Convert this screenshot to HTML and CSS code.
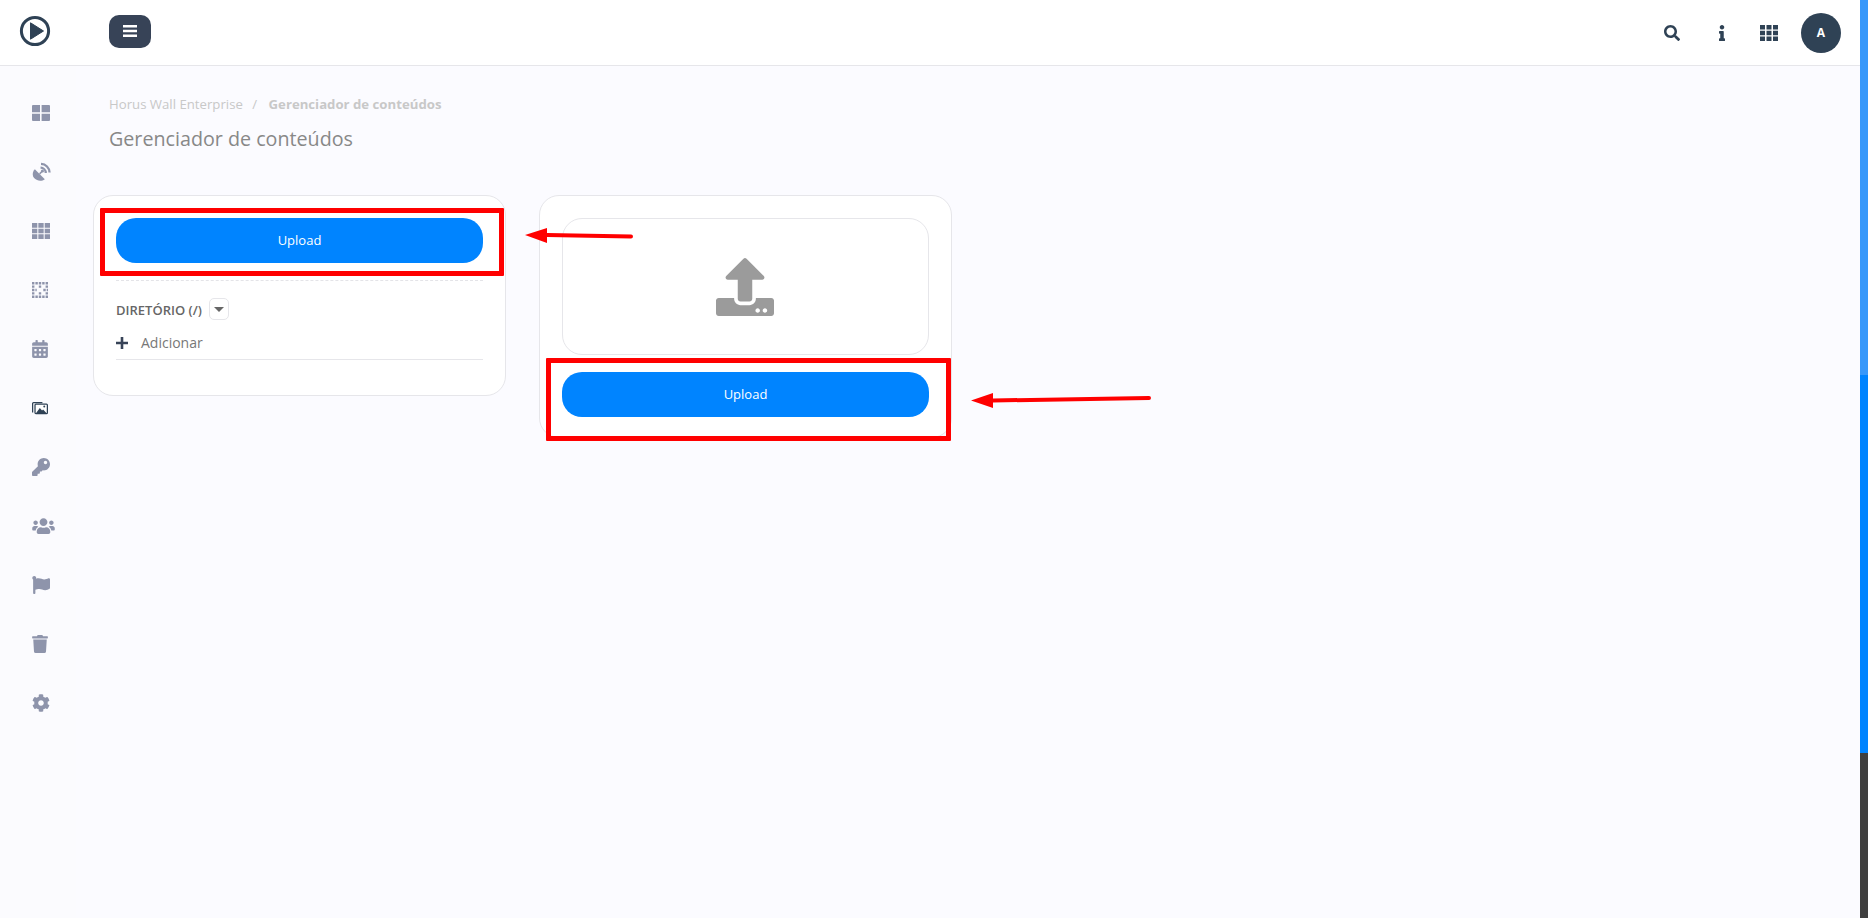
FILE: index.html
```html
<!DOCTYPE html>
<html lang="en">
<head>
    <meta charset="UTF-8">
    <meta name="viewport" content="width=device-width, initial-scale=1.0">
    <title>Gerenciador de conteúdos</title>
    <link rel="stylesheet" href="styles.css">
</head>
<body>
    <div class="app">
        <header class="topbar">
            <div class="logo-box">
                <svg class="logo" viewBox="0 0 32 32"><circle cx="16" cy="16" r="13.6" fill="none" stroke="#2f4255" stroke-width="3"/><path d="M11.5 7.8 24.5 16 11.5 24.2Z" fill="#2f4255" stroke="#2f4255" stroke-linejoin="round"/></svg>
            </div>
            <button class="menu-btn" type="button">
                <svg viewBox="0 0 14 12"><path d="M0 0h14v2.4H0zM0 4.8h14v2.4H0zM0 9.6h14V12H0z" fill="#fff"/></svg>
            </button>
            <nav class="top-actions">
                <svg class="top-icon search" viewBox="0 0 512 512"><path d="M505 442.7L405.3 343c-4.5-4.5-10.6-7-17-7H372c27.6-35.3 44-79.7 44-128C416 93.1 322.9 0 208 0S0 93.1 0 208s93.1 208 208 208c48.3 0 92.7-16.4 128-44v16.3c0 6.4 2.5 12.5 7 17l99.7 99.7c9.4 9.4 24.6 9.4 33.9 0l28.3-28.3c9.4-9.4 9.4-24.6.1-34zM208 336c-70.7 0-128-57.2-128-128 0-70.7 57.2-128 128-128 70.7 0 128 57.2 128 128 0 70.7-57.2 128-128 128z"/></svg>
                <svg class="top-icon info" viewBox="0 0 192 512"><path d="M20 424.229h20V279.771H20c-11.046 0-20-8.954-20-20V212c0-11.046 8.954-20 20-20h112c11.046 0 20 8.954 20 20v212.229h20c11.046 0 20 8.954 20 20V492c0 11.046-8.954 20-20 20H20c-11.046 0-20-8.954-20-20v-47.771c0-11.046 8.954-20 20-20zM96 0C56.235 0 24 32.235 24 72s32.235 72 72 72 72-32.235 72-72S135.764 0 96 0z"/></svg>
                <svg class="top-icon grid" viewBox="0 0 18 16"><path d="M0 0h5v4.6H0zM6.5 0h5v4.6h-5zM13 0h5v4.6h-5zM0 5.7h5v4.6H0zM6.5 5.7h5v4.6h-5zM13 5.7h5v4.6h-5zM0 11.4h5V16H0zM6.5 11.4h5V16h-5zM13 11.4h5V16h-5z"/></svg>
                <div class="avatar">A</div>
            </nav>
        </header>
        <div class="body-row">
            <aside class="sidebar">
                <svg class="side-icon" viewBox="0 0 18 16"><path d="M0 1a1 1 0 0 1 1-1h7v7.3H0zM9.6 0h7.4a1 1 0 0 1 1 1v6.3H9.6zM0 8.7h8V16H1a1 1 0 0 1-1-1zM9.6 8.7H18V15a1 1 0 0 1-1 1H9.6z"/></svg>
                <svg class="side-icon dish" viewBox="0 0 20 20"><path d="M3 7 13.500 17.500C10 20 5.500 19.500 2.500 16.500-.2 13.500.5 9.500 3 7Z"/><path d="M8 12l3-3" stroke="#8e94ab" stroke-width="1.600" fill="none"/><circle cx="11" cy="9" r="1.600"/><path d="M9 5.500C12 5.600 14.400 8 14.500 11M9.500 1.500C14.500 1.700 18.300 5.500 18.500 10.500" stroke="#8e94ab" stroke-width="2.400" fill="none"/></svg>
                <svg class="side-icon" viewBox="0 0 18 16"><path d="M0 0h5.300v4.700H0zM6.350 0h5.300v4.700h-5.300zM12.700 0H18v4.700h-5.300zM0 5.650h5.300v4.700H0zM6.350 5.650h5.300v4.700h-5.300zM12.700 5.650H18v4.700h-5.300zM0 11.300h5.300V16H0zM6.350 11.300h5.300V16h-5.300zM12.700 11.300H18V16h-5.300z"/></svg>
                <svg class="side-icon dotted" viewBox="0 0 16 16"><path d="M0 1.200h16M0 8h4.700M11.300 8H16M0 14.800h16" stroke-dasharray="2.400 1"/><path d="M0 4.600h2.400M6.800 4.600h2.400M13.600 4.600H16M0 11.400h2.400M6.800 11.400h2.400M13.600 11.400H16"/></svg>
                <svg class="side-icon narrow" viewBox="0 0 448 512"><path d="M0 464c0 26.500 21.500 48 48 48h352c26.500 0 48-21.500 48-48V192H0v272zm320-196c0-6.600 5.400-12 12-12h40c6.600 0 12 5.400 12 12v40c0 6.600-5.400 12-12 12h-40c-6.600 0-12-5.400-12-12v-40zm0 128c0-6.600 5.400-12 12-12h40c6.600 0 12 5.400 12 12v40c0 6.600-5.400 12-12 12h-40c-6.600 0-12-5.400-12-12v-40zM192 268c0-6.600 5.400-12 12-12h40c6.600 0 12 5.400 12 12v40c0 6.600-5.400 12-12 12h-40c-6.600 0-12-5.400-12-12v-40zm0 128c0-6.600 5.400-12 12-12h40c6.600 0 12 5.400 12 12v40c0 6.600-5.400 12-12 12h-40c-6.600 0-12-5.400-12-12v-40zM64 268c0-6.600 5.400-12 12-12h40c6.600 0 12 5.400 12 12v40c0 6.600-5.400 12-12 12H76c-6.600 0-12-5.400-12-12v-40zm0 128c0-6.600 5.400-12 12-12h40c6.600 0 12 5.400 12 12v40c0 6.600-5.400 12-12 12H76c-6.600 0-12-5.400-12-12v-40zM400 64h-48V16c0-8.800-7.200-16-16-16h-32c-8.800 0-16 7.200-16 16v48H160V16c0-8.800-7.200-16-16-16h-32c-8.800 0-16 7.200-16 16v48H48C21.500 64 0 85.500 0 112v48h448v-48c0-26.500-21.500-48-48-48z"/></svg>
                <svg class="side-icon narrow" viewBox="0 0 18 16"><path d="M.7 13V3a1 1 0 0 1 1-1h10" fill="none" stroke="#2f4255" stroke-width="1.400"/><rect x="3.400" y="3.700" width="13.900" height="10.600" rx="1" fill="#fff" stroke="#2f4255" stroke-width="1.400"/><circle cx="13.800" cy="6.300" r="1.100" fill="#2f4255"/><path d="M4 14.500 8.800 8l2.500 2.800 1.200-1 4.500 4.700Z" fill="#2f4255"/></svg>
                <svg class="side-icon" viewBox="0 0 512 512"><path d="M512 176.001C512 273.203 433.202 352 336 352c-11.220 0-22.190-1.062-32.827-3.069l-24.012 27.014A23.999 23.999 0 0 1 261.223 384H224v40c0 13.255-10.745 24-24 24h-40v40c0 13.255-10.745 24-24 24H24c-13.255 0-24-10.745-24-24v-78.059c0-6.365 2.529-12.470 7.029-16.971l161.802-161.802C163.108 213.814 160 195.271 160 176 160 78.798 238.797.001 335.999 0 433.488-.001 512 78.511 512 176.001zM336 128c0 26.510 21.490 48 48 48s48-21.490 48-48-21.490-48-48-48-48 21.490-48 48z"/></svg>
                <svg class="side-icon wide" viewBox="0 0 640 512"><path d="M96 224c35.300 0 64-28.700 64-64s-28.700-64-64-64-64 28.700-64 64 28.700 64 64 64zm448 0c35.300 0 64-28.700 64-64s-28.700-64-64-64-64 28.700-64 64 28.700 64 64 64zm32 32h-64c-17.600 0-33.500 7.100-45.100 18.600 40.300 22.100 68.900 62 75.100 109.400h66c17.700 0 32-14.300 32-32v-32c0-35.300-28.700-64-64-64zm-256 0c61.900 0 112-50.100 112-112S381.900 32 320 32 208 82.100 208 144s50.100 112 112 112zm76.800 32h-8.300c-20.800 10-43.900 16-68.500 16s-47.600-6-68.500-16h-8.300C179.600 288 128 339.600 128 403.200V432c0 26.500 21.500 48 48 48h288c26.500 0 48-21.500 48-48v-28.800c0-63.600-51.600-115.200-115.200-115.200zm-223.700-13.400C161.500 263.100 145.600 256 128 256H64c-35.300 0-64 28.700-64 64v32c0 17.700 14.300 32 32 32h65.900c6.300-47.400 34.900-87.300 75.200-109.400z"/></svg>
                <svg class="side-icon" viewBox="0 0 512 512"><path d="M349.565 98.783C295.978 98.783 251.721 64 184.348 64c-24.955 0-47.309 4.384-68.045 12.013a55.947 55.947 0 0 0 3.586-23.562C118.117 24.015 94.806 1.206 66.338.048 34.345-1.254 8 24.296 8 56c0 19.026 9.497 35.825 24 45.945V488c0 13.255 10.745 24 24 24h16c13.255 0 24-10.745 24-24v-94.400c28.311-12.064 63.582-22.122 114.435-22.122 53.588 0 97.844 34.783 165.217 34.783 48.169 0 86.667-16.294 122.505-40.858C506.840 359.452 512 349.571 512 339.045v-243.100c0-23.393-24.269-38.870-45.485-29.016-34.338 15.948-76.454 31.854-116.950 31.854z"/></svg>
                <svg class="side-icon narrow" viewBox="0 0 448 512"><path d="M432 32H312l-9.400-18.700A24 24 0 0 0 281.100 0H166.800a23.720 23.720 0 0 0-21.400 13.300L136 32H16A16 16 0 0 0 0 48v32a16 16 0 0 0 16 16h416a16 16 0 0 0 16-16V48a16 16 0 0 0-16-16zM53.200 467a48 48 0 0 0 47.900 45h245.800a48 48 0 0 0 47.900-45L416 128H32z"/></svg>
                <svg class="side-icon" viewBox="0 0 512 512"><path d="M487.400 315.700l-42.600-24.600c4.300-23.200 4.300-47 0-70.200l42.600-24.600c4.900-2.800 7.100-8.600 5.500-14-11.100-35.600-30-67.800-54.700-94.600-3.800-4.100-10-5.100-14.800-2.300L380.800 110c-17.900-15.400-38.500-27.300-60.800-35.100V25.800c0-5.600-3.900-10.500-9.400-11.700-36.700-8.200-74.300-7.800-109.200 0-5.500 1.200-9.400 6.100-9.400 11.700V75c-22.200 7.900-42.800 19.800-60.800 35.100L88.700 85.500c-4.900-2.800-11-1.900-14.800 2.300-24.700 26.700-43.600 58.900-54.700 94.600-1.700 5.400.6 11.200 5.500 14L67.300 221c-4.300 23.200-4.300 47 0 70.200l-42.600 24.600c-4.900 2.800-7.100 8.600-5.500 14 11.100 35.600 30 67.800 54.700 94.600 3.800 4.100 10 5.100 14.800 2.300l42.600-24.600c17.900 15.400 38.500 27.300 60.800 35.100v49.200c0 5.600 3.900 10.500 9.400 11.700 36.700 8.200 74.300 7.800 109.200 0 5.500-1.200 9.400-6.100 9.400-11.700v-49.200c22.200-7.900 42.800-19.800 60.800-35.100l42.600 24.600c4.900 2.800 11 1.900 14.800-2.300 24.700-26.700 43.600-58.900 54.700-94.600 1.500-5.500-.7-11.300-5.600-14.100zM256 336c-44.100 0-80-35.900-80-80s35.900-80 80-80 80 35.900 80 80-35.900 80-80 80z"/></svg>
            </aside>
            <main class="content">
                <div class="breadcrumb">
                    <span>Horus Wall Enterprise</span>
                    <span class="sep">/</span>
                    <strong>Gerenciador de conteúdos</strong>
                </div>
                <h1 class="page-title">Gerenciador de conteúdos</h1>
                <div class="cards">
                    <section class="card card-files">
                        <button class="upload-btn" type="button">Upload</button>
                        <div class="dashed"></div>
                        <div class="dir-row">
                            <span class="dir-label">DIRETÓRIO (/)</span>
                            <span class="dir-caret"></span>
                        </div>
                        <div class="add-row">
                            <svg class="plus" viewBox="0 0 12 12"><path d="M4.700 0h2.600v4.700H12v2.600H7.300V12H4.700V7.300H0V4.700h4.700z"/></svg>
                            <span>Adicionar</span>
                        </div>
                    </section>
                    <section class="card card-upload">
                        <div class="dropzone">
                            <svg class="drop-icon" viewBox="0 0 512 512"><path d="M296 384h-80c-13.300 0-24-10.700-24-24V192h-87.700c-17.800 0-26.700-21.500-14.100-34.100L242.300 5.700c7.500-7.500 19.800-7.500 27.300 0l152.200 152.200c12.600 12.600 3.700 34.100-14.100 34.100H320v168c0 13.300-10.700 24-24 24zm216-8v112c0 13.300-10.700 24-24 24H24c-13.300 0-24-10.700-24-24V376c0-13.300 10.700-24 24-24h136v8c0 30.900 25.100 56 56 56h80c30.900 0 56-25.100 56-56v-8h136c13.300 0 24 10.700 24 24zm-124 88c0-11-9-20-20-20s-20 9-20 20 9 20 20 20 20-9 20-20zm64 0c0-11-9-20-20-20s-20 9-20 20 9 20 20 20 20-9 20-20z"/></svg>
                        </div>
                        <button class="upload-btn" type="button">Upload</button>
                    </section>
                </div>
            </main>
        </div>
        <!-- red annotations drawn over the screenshot -->
        <div class="mark mark-left"></div>
        <div class="mark mark-right"></div>
        <svg class="arrows" viewBox="0 0 1860 918">
            <path d="M631 236.500 547 235" class="arrow-line"/>
            <path d="M525 235 547 228V243Z" class="arrow-head"/>
            <path d="M1149 398 993 400.500" class="arrow-line"/>
            <path d="M971 400.500 993 393V408Z" class="arrow-head"/>
        </svg>
    </div>
    <div class="scroll-strip">
        <div class="strip-light"></div>
        <div class="strip-blue"></div>
        <div class="strip-dark"></div>
    </div>
</body>
</html>
```

FILE: styles.css
```css
html, body {
    height: 100%;
}

body {
    font-family: 'Open Sans', sans-serif;
    margin: 0;
    display: flex;
    overflow: hidden;
    background: #fbfbff;
    color: #777;
}

.app {
    position: relative;
    flex: 1;
    display: flex;
    flex-direction: column;
    min-width: 0;
}

.topbar {
    height: 65px;
    flex: none;
    display: flex;
    align-items: center;
    background: #fff;
    border-bottom: 1px solid #e6e6ea;
}

.logo-box {
    width: 109px;
    margin-top: -3px;
    padding-left: 19px;
    box-sizing: border-box;
    display: flex;
}

.logo {
    width: 32px;
    height: 32px;
}

.menu-btn {
    width: 42px;
    height: 33px;
    margin-top: -3px;
    padding: 0;
    border: none;
    border-radius: 10px;
    background: #374357;
    display: flex;
    align-items: center;
    justify-content: center;
}

.menu-btn svg {
    width: 14px;
    height: 12px;
}

.top-actions {
    margin-left: auto;
    display: flex;
    align-items: center;
    padding-right: 19px;
}

.top-icon {
    fill: #2f4255;
}

.search {
    width: 16px;
    height: 16px;
    margin-right: 39px;
}

.info {
    width: 6px;
    height: 16px;
    margin-right: 35px;
}

.grid {
    width: 18px;
    height: 16px;
    margin-right: 23px;
}

.avatar {
    width: 40px;
    height: 40px;
    border-radius: 50%;
    background: #2f4255;
    color: #fff;
    font-size: 12px;
    font-weight: 700;
    display: flex;
    align-items: center;
    justify-content: center;
}

.body-row {
    flex: 1;
    display: flex;
    min-height: 0;
}

.sidebar {
    width: 76px;
    flex: none;
    padding: 38px 0 0 32px;
    box-sizing: border-box;
    background: #fbfbfe;
    display: flex;
    flex-direction: column;
    align-items: flex-start;
    gap: 41px;
}

.side-icon {
    width: 18px;
    height: 18px;
    fill: #8e94ab;
}

.side-icon.wide {
    width: 23px;
}

.side-icon.narrow {
    width: 16px;
}

.side-icon.dish {
    width: 19px;
    height: 20px;
    margin: -1px 0;
}

.side-icon.dotted {
    width: 16px;
    fill: none;
    stroke: #8e94ab;
    stroke-width: 2.400;
}

.content {
    flex: 1;
    padding: 28px 0 0 17px;
}

.breadcrumb {
    padding-left: 16px;
    font-size: 13.200px;
    line-height: 20px;
    color: #c8c8c8;
}

.breadcrumb .sep {
    margin: 0 8px 0 6px;
}

.breadcrumb strong {
    font-weight: 700;
}

.page-title {
    margin: 12px 0 0;
    padding-left: 16px;
    font-size: 19.700px;
    line-height: 26px;
    font-weight: 400;
    color: #888;
}

.cards {
    margin-top: 43px;
    display: flex;
    align-items: flex-start;
    gap: 33px;
}

.card {
    width: 413px;
    box-sizing: border-box;
    padding: 22px 22px 0;
    background: #fff;
    border: 1px solid #e6e6ea;
    border-radius: 20px;
}

.card-files {
    height: 201px;
}

.card-upload {
    height: 243px;
}

.upload-btn {
    display: block;
    width: 100%;
    height: 45px;
    padding-bottom: 2px;
    border: none;
    border-radius: 20px;
    background: #0084ff;
    color: #fff;
    font-family: inherit;
    font-size: 13px;
    font-weight: 500;
}

.dashed {
    margin-top: 17px;
    border-top: 1px dashed #e4e4e8;
}

.dir-row {
    margin-top: 17px;
    display: flex;
    align-items: center;
    gap: 7px;
}

.dir-label {
    padding-top: 2px;
    font-size: 13px;
    font-weight: 600;
    color: #666;
}

.dir-caret {
    width: 20px;
    height: 22px;
    box-sizing: border-box;
    border: 1px solid #e6e6ea;
    border-radius: 5px;
    display: flex;
    align-items: center;
    justify-content: center;
}

.dir-caret::after {
    content: "";
    border-left: 5px solid transparent;
    border-right: 5px solid transparent;
    border-top: 5px solid #666;
}

.add-row {
    margin-top: 13px;
    padding-bottom: 7px;
    display: flex;
    align-items: center;
    gap: 13px;
    font-size: 14px;
    color: #777;
    border-bottom: 1px solid #e6e6ea;
}

.plus {
    width: 12px;
    height: 12px;
    fill: #374357;
}

.dropzone {
    height: 137px;
    box-sizing: border-box;
    margin-bottom: 17px;
    border: 1px solid #e6e6ea;
    border-radius: 20px;
    display: flex;
    align-items: center;
    justify-content: center;
}

.drop-icon {
    width: 58px;
    height: 58px;
    margin-right: 2px;
    fill: #9b9b9b;
}

.mark {
    position: absolute;
    box-sizing: border-box;
    border: 5px solid #f00;
    border-radius: 1px;
}

.mark-left {
    left: 100px;
    top: 208px;
    width: 404px;
    height: 68px;
}

.mark-right {
    left: 546px;
    top: 358px;
    width: 405px;
    height: 83px;
}

.arrows {
    position: absolute;
    left: 0;
    top: 0;
    width: 1860px;
    height: 918px;
    pointer-events: none;
}

.arrow-line {
    fill: none;
    stroke: #f00;
    stroke-width: 4;
    stroke-linecap: round;
}

.arrow-head {
    fill: #f00;
}

.scroll-strip {
    width: 8px;
    flex: none;
    display: flex;
    flex-direction: column;
}

.strip-light {
    height: 375px;
    background: #3898fa;
}

.strip-blue {
    height: 378px;
    background: #0084ff;
}

.strip-dark {
    flex: 1;
    background: #3f3f3f;
}
```
